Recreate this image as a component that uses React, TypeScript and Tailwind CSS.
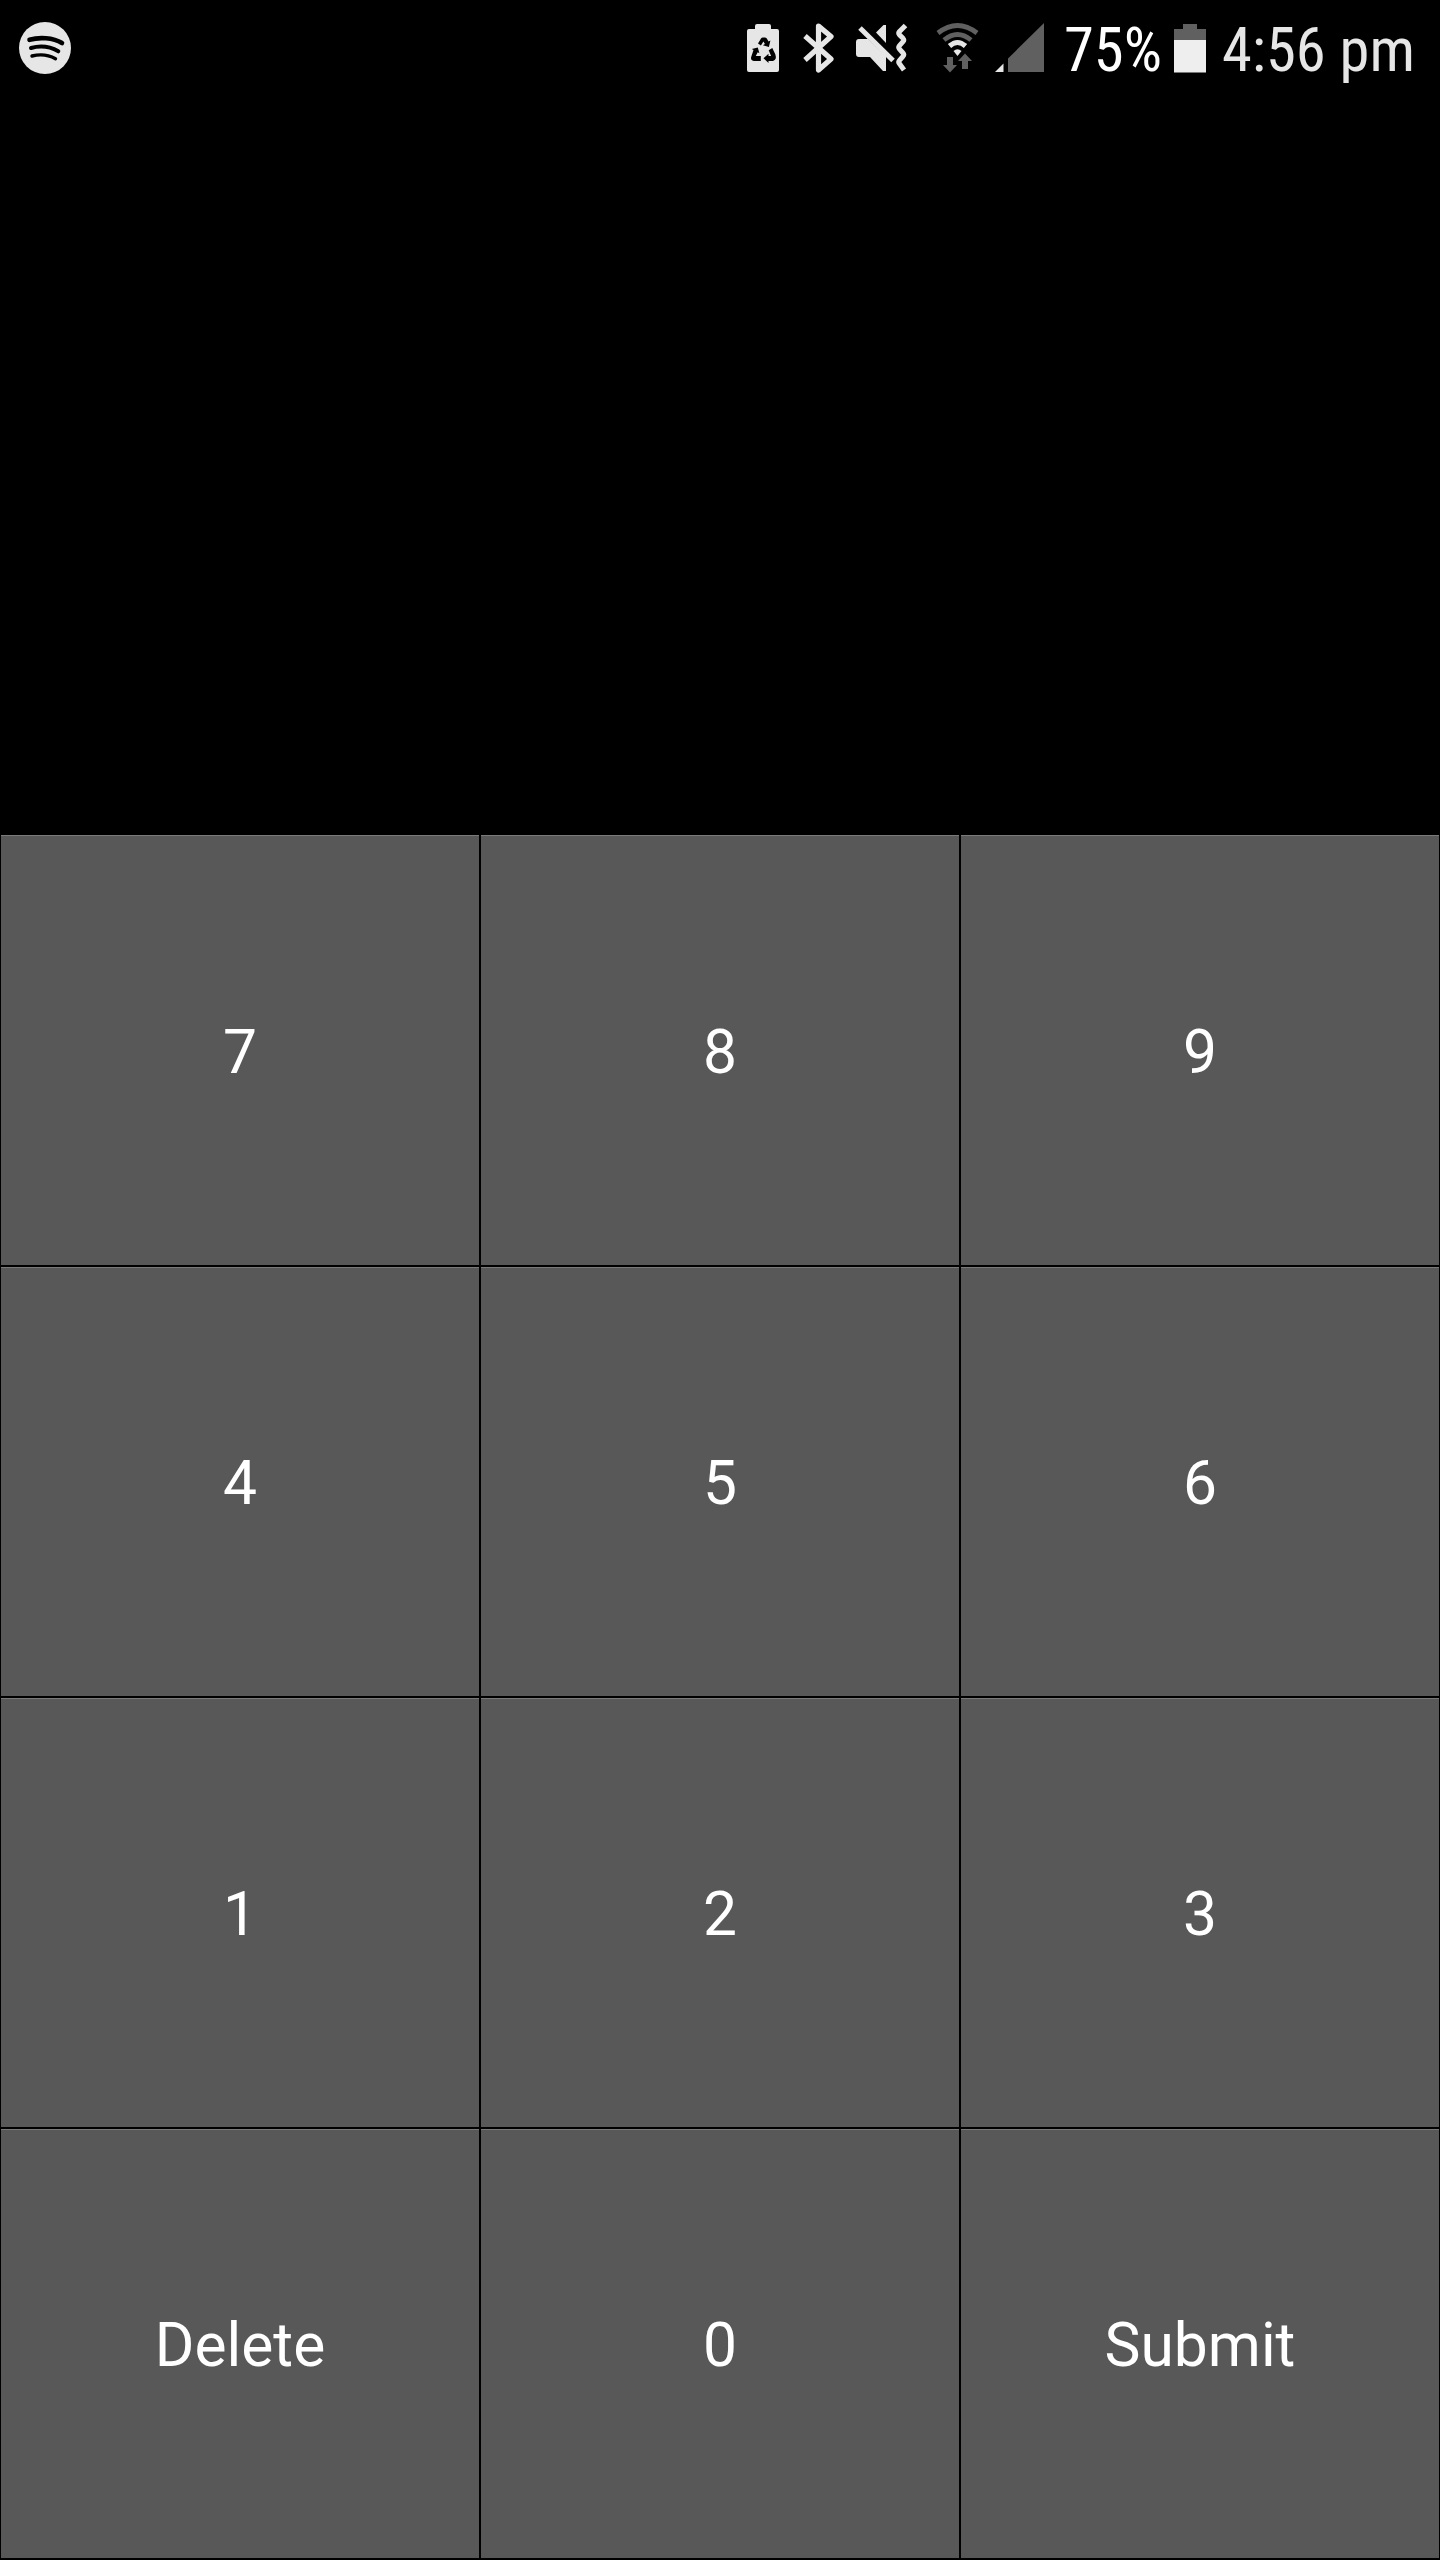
import React from "react";

const keys = ["7", "8", "9", "4", "5", "6", "1", "2", "3", "Delete", "0", "Submit"];

function SpotifyIcon() {
  return (
    <svg width="52" height="52" viewBox="0 0 52 52" fill="none" stroke="#000" strokeLinecap="round">
      <circle cx="26" cy="26" r="26" fill="#e6e6e6" stroke="none" />
      <path d="M10.500 17.800C20 15 34 15.500 43 21" strokeWidth="4.600" />
      <path d="M12 26C21 23.500 31 24.500 39.300 29.300" strokeWidth="4" />
      <path d="M13 34C21 32 29 32.500 36.500 36.700" strokeWidth="3.400" />
    </svg>
  );
}

function StatusIcons() {
  return (
    <svg width="320" height="80" viewBox="730 10 320 80">
      {/* battery saver */}
      <path d="M747 31q0-2 2-2h6v-3q0-2 2-2h12q2 0 2 2v3h6q2 0 2 2v39q0 2-2 2h-28q-2 0-2-2z" fill="#e6e6e6" />
      <g fill="#000">
        <path d="M758 43.500l3-5q.7-1 1.800-1h2q1.200 0 2 1l1.700 3 1.900-1-1.500 6.500-6-1.700 2-1.300-1.500-2.500-2.500 4z" />
        <path d="M753.500 50l-1.700-1 6-1.600 1.600 5.800-1.700-.9-1.900 3.700h5v5h-7q-3.300-.6-2.700-3.800z" />
        <path d="M768.700 50.300l3.600-2.200 3 6.200q1.800 5.600-2.300 6.700h-4.500v2l-5-4.700 5-4.500v2.200h2.600z" />
      </g>
      {/* bluetooth */}
      <path d="M805 36l26 23-12.500 11V26l12.500 10.500L805 60" fill="none" stroke="#e6e6e6" strokeWidth="5.200" strokeLinejoin="round" />
      {/* muted and vibrating */}
      <g fill="#e6e6e6">
        <path d="M856 42q0-3 3-3h9l18 17v15h-3l-13-14h-11q-3 0-3-3z" />
        <path d="M876 32.500l7.500-7.500h2.500v18z" />
      </g>
      <path d="M863 24l33 33" stroke="#000" strokeWidth="4" />
      <path d="M860 28l33 32.500" stroke="#e6e6e6" strokeWidth="5" />
      <path d="M905.500 25.500l-6 6q-1.500 1.700 0 3.400l3.500 3.400q1.500 1.700 0 3.400l-3.500 4q-1.500 1.700 0 3.400l3.500 3.900q1.500 1.700 0 3.400l-3.500 4q-1.500 1.700 0 3.400l4.500 6.200" fill="none" stroke="#e6e6e6" strokeWidth="5" strokeLinejoin="round" />
      {/* wifi */}
      <g fill="none">
        <path d="M938 33q19.500-15 39 0" stroke="#606060" strokeWidth="4.800" />
        <path d="M944 40q13.500-11 27 0" stroke="#606060" strokeWidth="4.800" />
        <path d="M949.500 46q8-7 16 0" stroke="#e6e6e6" strokeWidth="5" />
      </g>
      <path d="M953.500 51q4-3.500 8 0l-4 5z" fill="#e6e6e6" />
      <path d="M947 57h6v8h4l-7 7.500-7-7.500h4zM962 69v-8h-4l7-7.500 7 7.500h-4v8z" fill="#606060" />
      {/* signal */}
      <path d="M1044 23v49h-36V58.500z" fill="#606060" />
      <path d="M1003.500 63.500V72H995z" fill="#e6e6e6" />
    </svg>
  );
}

function StatusBar() {
  return (
    <header className="flex h-24 items-start justify-between pl-[19px]">
      <div className="pt-[22px]">
        <SpotifyIcon />
      </div>
      <div className="flex items-start">
        <div className="pt-[10px]">
          <StatusIcons />
        </div>
        <div className="flex w-[390px] pt-[16px] text-[60.5px] leading-[70px] font-normal whitespace-pre [font-stretch:75%]">
          <span className="w-[124px] pl-[14px] text-white">75%</span>
          <svg className="mt-[8px] shrink-0" width="32" height="50" viewBox="0 0 32 50">
            <path d="M0 5h9V0h14v5h9v11H0z" fill="#606060" />
            <path d="M0 16h32v32.500H0z" fill="#eeeeee" />
          </svg>
          <span className="pl-[16px] text-[#e6e6e6]">4:56 pm</span>
        </div>
      </div>
    </header>
  );
}

export default function App() {
  return (
    <div className="flex h-[2560px] w-[1440px] flex-col overflow-hidden bg-black font-['Roboto',sans-serif]">
      <StatusBar />
      <div className="h-[739px] shrink-0" />
      <main className="grid h-[1724px] shrink-0 grid-cols-3 grid-rows-4">
        {keys.map((key) => (
          <button
            key={key}
            className="flex items-center justify-center border border-black bg-[#585858] pt-[5px] text-[60.5px] leading-[70px] text-white shadow-[inset_0_1px_0_#7a7a7a] nth-[-n+3]:border-t-0"
          >
            {key}
          </button>
        ))}
      </main>
    </div>
  );
}
